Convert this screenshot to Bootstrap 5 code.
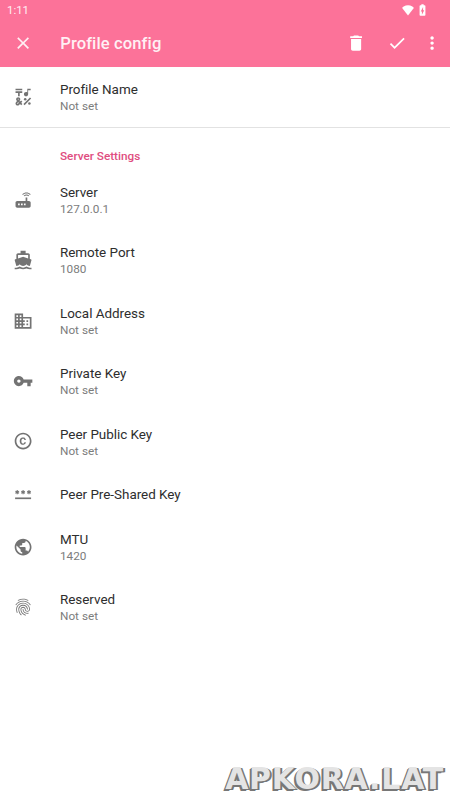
<!DOCTYPE html>
<html lang="en">
<head>
<meta charset="utf-8">
<meta name="viewport" content="width=device-width, initial-scale=1">
<title>Profile config</title>
<link href="https://cdn.jsdelivr.net/npm/bootstrap@5.3.0/dist/css/bootstrap.min.css" rel="stylesheet">
<style>
body{font-family:Roboto,sans-serif;background:#fff;height:800px;overflow:hidden;color:#2e2e2e}
.app-head{background:#fc7299;height:67px;color:#fff0f4}
.status{height:20px;padding:0 20px 0 7px;font-size:11.4px;line-height:21px}
.toolbar{height:47px;padding-left:13px}
.app-title{font-size:16.6px;font-weight:500;margin-left:27px;line-height:20px;padding-top:1px;letter-spacing:.1px}
svg{display:block;fill:currentColor;flex:none}
.ic{width:20.2px;height:20.2px}
.act-done{margin-left:20px}
.act-more{margin-left:15px;margin-right:8px}
.pref{height:60.4px;padding-left:13.2px}
.pref.single{height:45px}
.pref .ic{color:#737373;margin-right:26.6px;margin-top:-1.2px}
.pref-title{font-size:13.45px;line-height:17px;letter-spacing:-.02px}
.pref-sum{font-size:11.75px;line-height:16px;color:#7c7c7c;letter-spacing:.03px}
.rule{height:1px;background:#e2e2e2}
.cat{height:41.9px;padding:19.5px 0 0 60px;font-size:11.75px;line-height:16px;font-weight:500;color:#e04d80}
.stamp{right:6px;bottom:3px;font:bold 30px/36px "DejaVu Sans",sans-serif;letter-spacing:.75px;color:#e4e4e4;text-shadow:-1px 1px 0 #777,-2px 2px 0 #777,1px 1px 0 #777,2px 1px 0 #777}
</style>
</head>
<body>
<header class="app-head">
  <div class="status d-flex justify-content-between align-items-center">
    <span>1:11</span>
    <span class="d-flex align-items-center text-white">
      <svg width="14" height="14" viewBox="0 0 24 24"><path d="M12 21.500L22 8.500C21 7 17.500 4 12 4S3 7 2 8.500z"/></svg>
      <svg width="15" height="14" viewBox="0 0 24 24"><path fill-rule="evenodd" d="M15.670 4H14V2h-4v2H8.330C7.600 4 7 4.600 7 5.330v15.330C7 21.400 7.600 22 8.330 22h7.330c.740 0 1.340-.6 1.340-1.330V5.330C17 4.600 16.400 4 15.670 4zM11 20v-5.500H9L13 7v5.500h2L11 20z"/></svg>
    </span>
  </div>
  <div class="toolbar d-flex align-items-center">
    <svg class="ic" viewBox="0 0 24 24"><path d="M19 6.410L17.590 5 12 10.590 6.410 5 5 6.410 10.590 12 5 17.590 6.410 19 12 13.410 17.590 19 19 17.590 13.410 12z"/></svg>
    <h1 class="app-title mb-0">Profile config</h1>
    <div class="d-flex ms-auto text-white">
      <svg class="ic" viewBox="0 0 24 24"><path d="M6 19c0 1.100.9 2 2 2h8c1.100 0 2-.9 2-2V7H6v12zM19 4h-3.500l-1-1h-5l-1 1H5v2h14V4z"/></svg>
      <svg class="ic act-done" viewBox="0 0 24 24"><path d="M9 16.170L4.830 12l-1.420 1.410L9 19 21 7l-1.410-1.410z"/></svg>
      <svg class="ic act-more" viewBox="0 0 24 24"><path d="M12 8c1.100 0 2-.9 2-2s-.9-2-2-2-2 .9-2 2 .9 2 2 2zm0 2c-1.100 0-2 .9-2 2s.9 2 2 2 2-.9 2-2-.9-2-2-2zm0 6c-1.100 0-2 .9-2 2s.9 2 2 2 2-.9 2-2-.9-2-2-2z"/></svg>
    </div>
  </div>
</header>
<main>
  <div class="pref d-flex align-items-center">
    <svg class="ic" viewBox="0 0 24 24"><path d="M3 2h8v2H3zM6 11h2V7h3V5H3v2h3zM12.404 20.182l7.778-7.778 1.414 1.414-7.778 7.778z"/><circle cx="14.500" cy="14.500" r="1.500"/><circle cx="19.500" cy="19.500" r="1.500"/><path d="M15.500 11c1.380 0 2.500-1.120 2.500-2.500V4h3V2h-4v4.510c-.42-.32-.93-.51-1.500-.51-1.380 0-2.500 1.120-2.500 2.500s1.120 2.500 2.500 2.500zM9.740 15.960l-1.410 1.410-.71-.71.35-.35c.98-.98.98-2.560 0-3.540-.49-.49-1.130-.73-1.770-.73-.64 0-1.280.24-1.770.73-.98.98-.98 2.560 0 3.540l.35.35-1.060 1.060c-.98.98-.98 2.560 0 3.540.5.5 1.140.74 1.780.74s1.280-.24 1.770-.73l1.060-1.060 1.410 1.410 1.410-1.410-1.410-1.410 1.410-1.410zm-3.890-1.770c.13-.13.27-.15.35-.15s.22.02.35.15c.2.2.2.51 0 .71l-.35.35-.35-.35c-.19-.2-.19-.51 0-.71zm0 5.650c-.13.13-.27.15-.35.15s-.22-.02-.35-.15c-.2-.2-.2-.51 0-.71l1.060-1.060.71.71z"/></svg>
    <div><div class="pref-title">Profile Name</div><div class="pref-sum">Not set</div></div>
  </div>
  <div class="rule"></div>
  <h2 class="cat mb-0">Server Settings</h2>
  <div class="pref d-flex align-items-center">
    <svg class="ic" viewBox="0 0 24 24"><path d="M20.200 5.900l.8-.8C19.600 3.700 17.800 3 16 3s-3.600.7-5 2.100l.8.8C13 4.800 14.500 4.200 16 4.200s3 .6 4.200 1.700zm-.9.8c-.9-.9-2.100-1.400-3.300-1.400s-2.400.5-3.300 1.400l.8.8c.7-.7 1.600-1 2.500-1 .9 0 1.800.3 2.500 1l.8-.8zM19 13h-2V9h-2v4H5c-1.100 0-2 .9-2 2v4c0 1.100.9 2 2 2h14c1.100 0 2-.9 2-2v-4c0-1.100-.9-2-2-2zM8 18H6v-2h2v2zm3.500 0h-2v-2h2v2zm3.500 0h-2v-2h2v2z"/></svg>
    <div><div class="pref-title">Server</div><div class="pref-sum">127.0.0.1</div></div>
  </div>
  <div class="pref d-flex align-items-center">
    <svg class="ic" viewBox="0 0 24 24"><path d="M20 21c-1.390 0-2.780-.47-4-1.320-2.440 1.710-5.560 1.710-8 0C6.780 20.530 5.390 21 4 21H2v2h2c1.380 0 2.740-.35 4-.99 2.520 1.290 5.480 1.290 8 0 1.260.65 2.620.99 4 .99h2v-2h-2zM3.950 19H4c1.600 0 3.020-.88 4-2 .98 1.120 2.400 2 4 2s3.020-.88 4-2c.98 1.120 2.400 2 4 2h.05l1.890-6.680c.08-.26.06-.54-.06-.78s-.34-.42-.6-.5L20 10.620V6c0-1.100-.9-2-2-2h-3V1H9v3H6c-1.100 0-2 .9-2 2v4.620l-1.290.42c-.26.08-.48.26-.6.5s-.15.52-.06.78L3.950 19zM6 6h12v3.970L12 8 6 9.970V6z"/></svg>
    <div><div class="pref-title">Remote Port</div><div class="pref-sum">1080</div></div>
  </div>
  <div class="pref d-flex align-items-center">
    <svg class="ic" viewBox="0 0 24 24"><path d="M12 7V3H2v18h20V7H12zM6 19H4v-2h2v2zm0-4H4v-2h2v2zm0-4H4V9h2v2zm0-4H4V5h2v2zm4 12H8v-2h2v2zm0-4H8v-2h2v2zm0-4H8V9h2v2zm0-4H8V5h2v2zm10 12h-8v-2h2v-2h-2v-2h2v-2h-2V9h8v10zm-2-8h-2v2h2v-2zm0 4h-2v2h2v-2z"/></svg>
    <div><div class="pref-title">Local Address</div><div class="pref-sum">Not set</div></div>
  </div>
  <div class="pref d-flex align-items-center">
    <svg class="ic" viewBox="0 0 24 24"><path d="M12.650 10C11.830 7.670 9.610 6 7 6c-3.310 0-6 2.690-6 6s2.690 6 6 6c2.610 0 4.830-1.670 5.650-4H17v4h4v-4h2v-4H12.650zM7 14c-1.100 0-2-.9-2-2s.9-2 2-2 2 .9 2 2-.9 2-2 2z"/></svg>
    <div><div class="pref-title">Private Key</div><div class="pref-sum">Not set</div></div>
  </div>
  <div class="pref d-flex align-items-center">
    <svg class="ic" viewBox="0 0 24 24"><path d="M10.080 10.860c.05-.33.16-.62.3-.87s.34-.46.59-.62c.24-.15.54-.22.91-.23.23.01.44.05.63.13.2.09.38.21.52.36s.25.33.34.53.13.42.14.64h1.790c-.02-.47-.11-.9-.28-1.290s-.4-.73-.7-1.010-.66-.5-1.080-.66-.88-.23-1.390-.23c-.65 0-1.220.11-1.700.34s-.88.53-1.200.92-.56.84-.71 1.360S8 11.290 8 11.870v.27c0 .58.08 1.120.23 1.640s.39.97.71 1.350.72.69 1.200.91 1.050.34 1.700.34c.47 0 .91-.08 1.320-.23s.77-.36 1.080-.63.56-.58.74-.94.29-.74.3-1.150h-1.790c-.01.21-.06.4-.15.58s-.21.33-.36.46-.32.23-.52.3c-.19.07-.39.09-.6.1-.36-.01-.66-.08-.89-.23-.25-.16-.45-.37-.59-.62s-.25-.55-.3-.88-.08-.67-.08-1v-.27c0-.35.03-.68.08-1.010zM12 2C6.480 2 2 6.480 2 12s4.480 10 10 10 10-4.480 10-10S17.520 2 12 2zm0 18c-4.410 0-8-3.590-8-8s3.590-8 8-8 8 3.590 8 8-3.590 8-8 8z"/></svg>
    <div><div class="pref-title">Peer Public Key</div><div class="pref-sum">Not set</div></div>
  </div>
  <div class="pref single d-flex align-items-center">
    <svg class="ic" viewBox="0 0 24 24"><path d="M2.500 16h19v2h-19z"/><g fill="none" stroke="currentColor" stroke-width="1.300"><path id="star" d="M5 7.200v5M2.800 8.450l4.400 2.500M7.200 8.450l-4.400 2.500"/><use href="#star" x="7"/><use href="#star" x="14"/></g></svg>
    <div class="pref-title">Peer Pre-Shared Key</div>
  </div>
  <div class="pref d-flex align-items-center">
    <svg class="ic" viewBox="0 0 24 24"><path d="M12 2C6.480 2 2 6.480 2 12s4.480 10 10 10 10-4.480 10-10S17.520 2 12 2zm-1 17.930c-3.950-.49-7-3.850-7-7.930 0-.62.08-1.210.21-1.790L9 15v1c0 1.100.9 2 2 2v1.930zm6.900-2.540c-.26-.81-1-1.390-1.900-1.390h-1v-3c0-.55-.45-1-1-1H8v-2h2c.55 0 1-.45 1-1V7h2c1.100 0 2-.9 2-2v-.41c2.930 1.190 5 4.060 5 7.410 0 2.080-.8 3.970-2.100 5.390z"/></svg>
    <div><div class="pref-title">MTU</div><div class="pref-sum">1420</div></div>
  </div>
  <div class="pref d-flex align-items-center">
    <svg class="ic" viewBox="0 0 24 24"><path d="M17.810 4.470c-.08 0-.16-.02-.23-.06C15.660 3.420 14 3 12.010 3c-1.980 0-3.860.47-5.570 1.410-.24.13-.54.04-.68-.2-.13-.24-.04-.55.2-.68C7.820 2.520 9.860 2 12.010 2c2.130 0 3.990.47 6.030 1.520.25.13.34.43.21.67-.09.18-.26.28-.44.28zM3.500 9.720c-.1 0-.2-.03-.29-.09-.23-.16-.28-.47-.12-.7.99-1.400 2.250-2.500 3.750-3.270C9.980 4.040 14 4.030 17.150 5.650c1.500.77 2.760 1.860 3.750 3.250.16.22.11.54-.12.7-.23.16-.54.11-.7-.12-.9-1.260-2.040-2.250-3.390-2.940-2.870-1.470-6.540-1.470-9.400.01-1.360.7-2.500 1.700-3.400 2.960-.08.14-.23.21-.39.21zm6.250 12.070c-.13 0-.26-.05-.35-.15-.87-.87-1.340-1.430-2.010-2.640-.69-1.230-1.050-2.730-1.050-4.340 0-2.970 2.540-5.390 5.660-5.390s5.660 2.420 5.660 5.390c0 .28-.22.5-.5.5s-.5-.22-.5-.5c0-2.420-2.090-4.390-4.660-4.390-2.570 0-4.660 1.970-4.660 4.390 0 1.440.32 2.770.93 3.850.64 1.150 1.080 1.640 1.850 2.420.19.2.19.51 0 .71-.11.1-.24.15-.37.15zm7.170-1.850c-1.190 0-2.240-.3-3.100-.89-1.490-1.010-2.380-2.650-2.380-4.390 0-.28.22-.5.5-.5s.5.22.5.5c0 1.410.72 2.740 1.940 3.560.71.48 1.540.71 2.540.71.24 0 .64-.03 1.040-.1.27-.05.53.13.58.41.05.27-.13.53-.41.58-.57.11-1.070.12-1.210.12zM14.910 22c-.04 0-.09-.01-.13-.02-1.590-.44-2.630-1.030-3.720-2.100-1.400-1.390-2.170-3.240-2.170-5.220 0-1.620 1.380-2.940 3.080-2.940 1.700 0 3.080 1.320 3.080 2.940 0 1.070.93 1.940 2.080 1.940s2.080-.87 2.080-1.940c0-3.770-3.250-6.830-7.250-6.830-2.840 0-5.440 1.580-6.610 4.030-.39.81-.59 1.760-.59 2.800 0 .78.07 2.010.67 3.610.1.26-.03.55-.29.64-.26.1-.55-.04-.64-.29-.49-1.310-.73-2.610-.73-3.960 0-1.200.23-2.290.68-3.240 1.330-2.790 4.280-4.600 7.510-4.600 4.550 0 8.250 3.510 8.250 7.830 0 1.620-1.380 2.940-3.080 2.940s-3.080-1.320-3.080-2.940c0-1.070-.93-1.940-2.080-1.940s-2.080.87-2.080 1.940c0 1.710.66 3.310 1.870 4.510.95.94 1.860 1.460 3.270 1.850.27.07.42.35.35.61-.05.23-.26.38-.47.38z"/></svg>
    <div><div class="pref-title">Reserved</div><div class="pref-sum">Not set</div></div>
  </div>
</main>
<div class="stamp position-absolute">APKORA.LAT</div>
<script src="https://cdn.jsdelivr.net/npm/bootstrap@5.3.0/dist/js/bootstrap.bundle.min.js"></script>
</body>
</html>
